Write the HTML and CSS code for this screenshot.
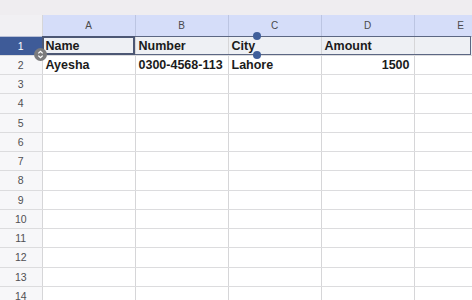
FILE: index.html
```html
<!DOCTYPE html>
<html lang="en">
<head>
    <meta charset="UTF-8">
    <title>Sheet</title>
    <link rel="stylesheet" href="styles.css">
</head>
<body>
    <div class="topbar"></div>
    <div class="sheet">
        <table class="grid">
            <colgroup>
                <col class="c-head">
                <col class="c-col"><col class="c-col"><col class="c-col"><col class="c-col"><col class="c-col">
            </colgroup>
            <tr class="col-heads">
                <th class="corner"></th><th>A</th><th>B</th><th>C</th><th>D</th><th>E</th>
            </tr>
            <tr class="row-sel">
                <th class="rh">1</th><td>Name</td><td>Number</td><td>City</td><td>Amount</td><td></td>
            </tr>
            <tr>
                <th class="rh">2</th><td>Ayesha</td><td>0300-4568-113</td><td>Lahore</td><td class="num">1500</td><td></td>
            </tr>
            <tr><th class="rh">3</th><td></td><td></td><td></td><td></td><td></td></tr>
            <tr><th class="rh">4</th><td></td><td></td><td></td><td></td><td></td></tr>
            <tr><th class="rh">5</th><td></td><td></td><td></td><td></td><td></td></tr>
            <tr><th class="rh">6</th><td></td><td></td><td></td><td></td><td></td></tr>
            <tr><th class="rh">7</th><td></td><td></td><td></td><td></td><td></td></tr>
            <tr><th class="rh">8</th><td></td><td></td><td></td><td></td><td></td></tr>
            <tr><th class="rh">9</th><td></td><td></td><td></td><td></td><td></td></tr>
            <tr><th class="rh">10</th><td></td><td></td><td></td><td></td><td></td></tr>
            <tr><th class="rh">11</th><td></td><td></td><td></td><td></td><td></td></tr>
            <tr><th class="rh">12</th><td></td><td></td><td></td><td></td><td></td></tr>
            <tr><th class="rh">13</th><td></td><td></td><td></td><td></td><td></td></tr>
            <tr><th class="rh">14</th><td></td><td></td><td></td><td></td><td></td></tr>
        </table>
        <!-- selection overlay -->
        <div class="sel-row"></div>
        <div class="sel-cell"></div>
        <span class="dot dot-top"></span>
        <span class="dot dot-bottom"></span>
        <span class="resize">
            <svg width="13" height="13" viewBox="0 0 13 13">
                <circle cx="6.5" cy="6.5" r="6.5" fill="#7b7b7d"/>
                <path d="M4.3 5.4 L6.5 3.3 L8.7 5.4 M4.3 7.6 L6.5 9.7 L8.7 7.6" fill="none" stroke="#fff" stroke-width="1.3"/>
            </svg>
        </span>
    </div>
</body>
</html>
```

FILE: styles.css
```css
body {
    margin: 0;
    background-color: #fff;
    font-family: "Liberation Sans", Arial, sans-serif;
    overflow: hidden;
}

.topbar {
    height: 15px;
    background-color: #efedf0;
}

.sheet {
    position: relative;
    overflow: hidden;
    width: 472px;
    height: 285px;
}

.grid {
    border-collapse: collapse;
    table-layout: fixed;
    width: 507px;
}

.c-head {
    width: 42px;
}

.c-col {
    width: 93px;
}

.grid th,
.grid td {
    padding: 0;
    box-sizing: border-box;
    white-space: nowrap;
    overflow: hidden;
}

.grid tr {
    height: 19.25px;
}

.grid td {
    border-right: 1px solid #d6d6d8;
    border-bottom: 1px solid #dcdcde;
    padding-left: 3px;
    font-size: 12.5px;
    font-weight: bold;
    color: #1b1b1b;
}

.grid td.num {
    text-align: right;
    padding-right: 4px;
}

.col-heads {
    height: 21px !important;
}

.col-heads th {
    background-color: #d5ddf9;
    border-right: 1px solid #bcc5e2;
    border-bottom: 1px solid #b9c0d6;
    font-size: 10px;
    font-weight: normal;
    color: #4a4a4c;
    height: 21px;
}

.col-heads th.corner {
    background-color: #f1f0f3;
    border-right: 1px solid #d6d6d8;
}

.rh {
    background-color: #f7f7f9;
    border-right: 1px solid #d6d6d8;
    border-bottom: 1px solid #dcdcde;
    font-size: 10.5px;
    font-weight: normal;
    color: #505052;
    text-align: center;
}

.row-sel .rh {
    background-color: #3e5b98;
    color: #fff;
}

.row-sel td {
    background-color: #eef0f4;
}

.sel-row {
    position: absolute;
    left: 42px;
    top: 21px;
    width: 429px;
    height: 19px;
    box-sizing: border-box;
    border: 1.5px solid #5c6783;
}

.sel-cell {
    position: absolute;
    left: 42px;
    top: 21px;
    width: 93px;
    height: 19px;
    box-sizing: border-box;
    border: 2px solid #4c5774;
}

.dot {
    position: absolute;
    left: 253px;
    width: 8px;
    height: 8px;
    border-radius: 50%;
    background-color: #3f5e9a;
}

.dot-top {
    top: 17px;
}

.dot-bottom {
    top: 36px;
}

.resize {
    position: absolute;
    left: 34px;
    top: 33px;
    width: 13px;
    height: 13px;
}

.resize svg {
    display: block;
}
```
